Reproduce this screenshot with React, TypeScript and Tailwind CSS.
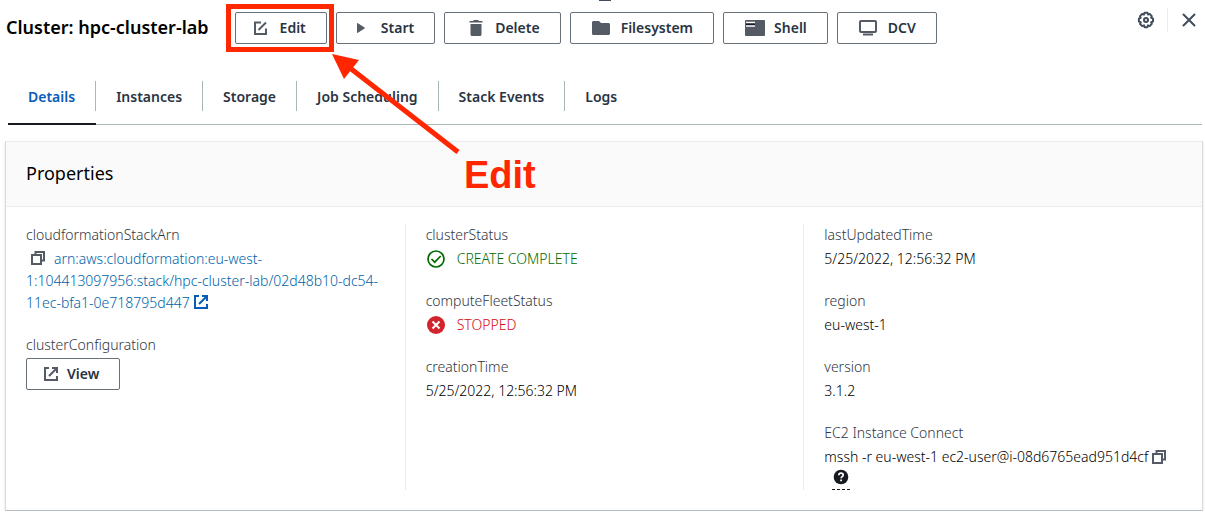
import type { ReactNode } from "react";

const ink = "#545b64";

function EditIcon() {
  return (
    <svg width="16" height="16" viewBox="0 0 16 16" fill="none" stroke={ink} strokeWidth="2">
      <path d="M9 2.500H3V14h11V8.500" />
      <path d="M6.500 10 14 2.500" />
    </svg>
  );
}

function ExternalIcon({ color = ink }: { color?: string }) {
  return (
    <svg className="inline-block align-[-2px]" width="16" height="16" viewBox="0 0 16 16" fill="none" stroke={color} strokeWidth="2">
      <path d="M6 2H2v12h12v-4" />
      <path d="M9 2h5v5M6 10l8-8" />
    </svg>
  );
}

function CopyIcon() {
  return (
    <svg width="16" height="16" viewBox="0 0 16 16" fill="none" stroke={ink} strokeWidth="2">
      <path d="M2 5h9v9H2z" />
      <path d="M5.500 5V2H14v8.500h-3" />
    </svg>
  );
}

function PlayIcon() {
  return (
    <svg width="16" height="16" viewBox="0 0 16 16" fill={ink} stroke={ink} strokeLinejoin="round">
      <path d="M4.500 3.500v9l7-4.500z" />
    </svg>
  );
}

function TrashIcon() {
  return (
    <svg width="24" height="24" viewBox="0 0 24 24" fill={ink}>
      <path d="M5.500 18.500c0 .8.7 1.500 1.500 1.500h8c.8 0 1.500-.7 1.500-1.500V8h-11zM17.500 5H14l-1-1H9L8 5H4.500v1.500h13z" />
    </svg>
  );
}

function FolderIcon() {
  return (
    <svg width="24" height="24" viewBox="0 0 24 24" fill={ink}>
      <path d="M8 5H2.500C1.600 5 1 5.700 1 6.500v11c0 .8.600 1.500 1.500 1.500h15c.8 0 1.500-.7 1.500-1.500v-9c0-.8-.7-1.500-1.500-1.500H10z" />
    </svg>
  );
}

function ShellIcon() {
  return (
    <svg width="24" height="24" viewBox="0 0 24 24">
      <rect x="1" y="4" width="20" height="16" rx="1" fill={ink} />
      <path d="M2 6.500h9M2 10h9" stroke="#fff" strokeWidth="1.500" />
      <path d="M2 8.300h9" stroke="#16191f" strokeWidth="1.500" />
    </svg>
  );
}

function MonitorIcon() {
  return (
    <svg width="24" height="24" viewBox="0 0 24 24" fill="none" stroke={ink} strokeWidth="2">
      <rect x="2" y="5" width="16" height="11" rx="1" />
      <path d="M5 18.500h10" />
    </svg>
  );
}

function GearIcon() {
  return (
    <svg width="18" height="18" viewBox="0 0 18 18" fill="none" stroke="#414d5c" strokeWidth="2" strokeLinejoin="round">
      <path d="M7.500 1.800h3l.5 1.700 1.700-.6 2.100 2.200-.7 1.600 1.900.9v2.900l-1.800.7.600 1.700-2.100 2.200-1.700-.8-.7 1.900H7.600L7 14.400l-1.800.7L3.100 13l.7-1.700-1.900-.7V7.700l1.800-.8-.7-1.800 2.100-2.100 1.800.6z" />
      <circle cx="9" cy="9" r="2" />
    </svg>
  );
}

type Action = { label: string; icon: ReactNode; small?: boolean };

const actions: Action[] = [
  { label: "Edit", icon: <EditIcon />, small: true },
  { label: "Start", icon: <PlayIcon />, small: true },
  { label: "Delete", icon: <TrashIcon /> },
  { label: "Filesystem", icon: <FolderIcon /> },
  { label: "Shell", icon: <ShellIcon /> },
  { label: "DCV", icon: <MonitorIcon /> },
];

const tabs = ["Details", "Instances", "Storage", "Job Scheduling", "Stack Events", "Logs"];

function Field({ label, children }: { label: string; children: ReactNode }) {
  return (
    <div>
      <dt className="mb-0.5 text-[#30363f]">{label}</dt>
      <dd>{children}</dd>
    </div>
  );
}

export default function App() {
  return (
    <main className="relative bg-white font-['Noto_Sans',sans-serif] text-sm font-light leading-[22px] text-black">
      <span className="absolute left-1/2 top-0 -ml-1 h-px w-3 bg-[#414d5c]" />

      <header className="flex items-start justify-between pl-[6px] pr-2 pt-3">
        <div className="flex items-center gap-[26px]">
          <h1 className="-mt-0.5 whitespace-nowrap text-lg font-semibold leading-[30px] text-black">Cluster: hpc-cluster-lab</h1>
          <div className="flex gap-[9px]">
            {actions.map((a) => (
              <button
                key={a.label}
                type="button"
                className={`flex h-8 items-center rounded-xs border border-[#687078] bg-white pr-5 font-semibold text-[#2a3442] ${
                  a.small ? "gap-3 pl-4" : "gap-[6px] pl-5"
                }`}
              >
                {a.icon}
                {a.label}
              </button>
            ))}
          </div>
        </div>
        <div className="-mt-1 flex items-center">
          <button type="button" aria-label="Preferences" className="pr-3">
            <GearIcon />
          </button>
          <button type="button" aria-label="Close" className="flex h-6 items-center border-l border-[#eaeded] pl-[13px]">
            <svg width="16" height="16" viewBox="0 0 16 16" fill="none" stroke="#414d5c" strokeWidth="2" strokeLinecap="round">
              <path d="m2.500 2.500 11 11m0-11-11 11" />
            </svg>
          </button>
        </div>
      </header>

      <nav className="ml-2 mr-[3px] mt-[37px] flex h-11 border-b border-[#aab7b8]">
        {tabs.map((t, i) => (
          <button
            key={t}
            type="button"
            className={`flex items-start font-semibold ${i === 0 ? "-mb-px border-b-2 border-[#16191f] text-[#0a5cb8]" : "text-[#2a3442]"}`}
          >
            <span className={`flex h-[30px] items-center px-5 pt-px ${i < tabs.length - 1 ? "border-r border-[#aab7b8]" : ""}`}>{t}</span>
          </button>
        ))}
      </nav>

      <section className="ml-[5px] mr-[2px] mt-4 border border-[#d5dbdb] border-t-[#eaeded] border-b-[#b6bec3] shadow-sm">
        <h2 className="border-b border-[#eaeded] bg-[#fafafa] px-5 pb-[22px] pt-5 text-lg font-normal leading-[22px]">Properties</h2>
        <dl className="grid grid-cols-3 pb-5 pt-[17px]">
          <div className="flex flex-col gap-5 px-5">
            <Field label="cloudformationStackArn">
              <button type="button" aria-label="Copy ARN" className="ml-1 mr-2 align-[-2px]">
                <CopyIcon />
              </button>
              <a href="#stack" className="text-[#005fa8]">
                arn:aws:cloudformation:eu-west-
                <wbr />
                1:104413097956:stack/hpc-cluster-lab/02d48b10-dc54-
                <wbr />
                11ec-bfa1-0e718795d447 <ExternalIcon color="#0a5cb8" />
              </a>
            </Field>
            <Field label="clusterConfiguration">
              <button
                type="button"
                className="flex h-8 items-center gap-2 rounded-xs border border-[#687078] px-4 pr-5 font-semibold text-[#2a3442]"
              >
                <ExternalIcon />
                View
              </button>
            </Field>
          </div>

          <div className="flex flex-col gap-5 border-l border-[#eaeded] px-5">
            <Field label="clusterStatus">
              <span className="flex items-center gap-[11px] text-[#006b00]">
                <svg width="20" height="20" viewBox="0 0 20 20" fill="none" stroke="currentColor" strokeWidth="1.700">
                  <circle cx="10" cy="10" r="8" />
                  <path d="m5.500 10 3.200 3.200 6-6.200" />
                </svg>
                CREATE COMPLETE
              </span>
            </Field>
            <Field label="computeFleetStatus">
              <span className="flex items-center gap-[11px] text-[#d60a12]">
                <svg width="20" height="20" viewBox="0 0 20 20">
                  <circle cx="10" cy="10" r="9" fill="#d1242b" />
                  <path d="m6.500 6.500 7 7m0-7-7 7" stroke="#fff" strokeWidth="2" />
                </svg>
                STOPPED
              </span>
            </Field>
            <Field label="creationTime">5/25/2022, 12:56:32 PM</Field>
          </div>

          <div className="flex flex-col gap-5 border-l border-[#eaeded] px-5">
            <Field label="lastUpdatedTime">5/25/2022, 12:56:32 PM</Field>
            <Field label="region">eu-west-1</Field>
            <Field label="version">3.1.2</Field>
            <Field label="EC2 Instance Connect">
              <div className="flex items-center gap-[3px] whitespace-nowrap">
                mssh -r eu-west-1 ec2-user@i-08d6765ead951d4cf
                <button type="button" aria-label="Copy command">
                  <CopyIcon />
                </button>
              </div>
              <button type="button" aria-label="Help" className="ml-2 block h-[22px] border-b border-dashed border-[#16191f] px-px">
                <svg className="-mt-1" width="16" height="16" viewBox="0 0 16 16" fill="none">
                  <circle cx="8" cy="8" r="7.300" fill="#16191f" />
                  <path d="M5.800 6.300c0-1.300 1-2.200 2.200-2.200s2.200.8 2.200 2c0 1.500-2.100 1.600-2.100 3.200" stroke="#fff" strokeWidth="1.700" />
                  <path d="M7.200 10.500h1.800v1.700H7.200z" fill="#fff" />
                </svg>
              </button>
            </Field>
          </div>
        </dl>
      </section>

      <div className="pointer-events-none absolute left-[226px] top-1 h-12 w-[108px] border-[5px] border-[#ff2600]" />
      <svg className="pointer-events-none absolute left-[326px] top-[48px]" width="140" height="112" viewBox="0 0 140 112">
        <path d="M24 20 132 104" stroke="#ff2600" strokeWidth="5" />
        <path d="M6 6 33 12 18 31z" fill="#ff2600" />
      </svg>
      <p className="pointer-events-none absolute left-[464px] top-[154px] font-['Liberation_Sans',sans-serif] text-[38px] font-bold leading-[42px] text-[#ff2600]">
        Edit
      </p>
    </main>
  );
}
